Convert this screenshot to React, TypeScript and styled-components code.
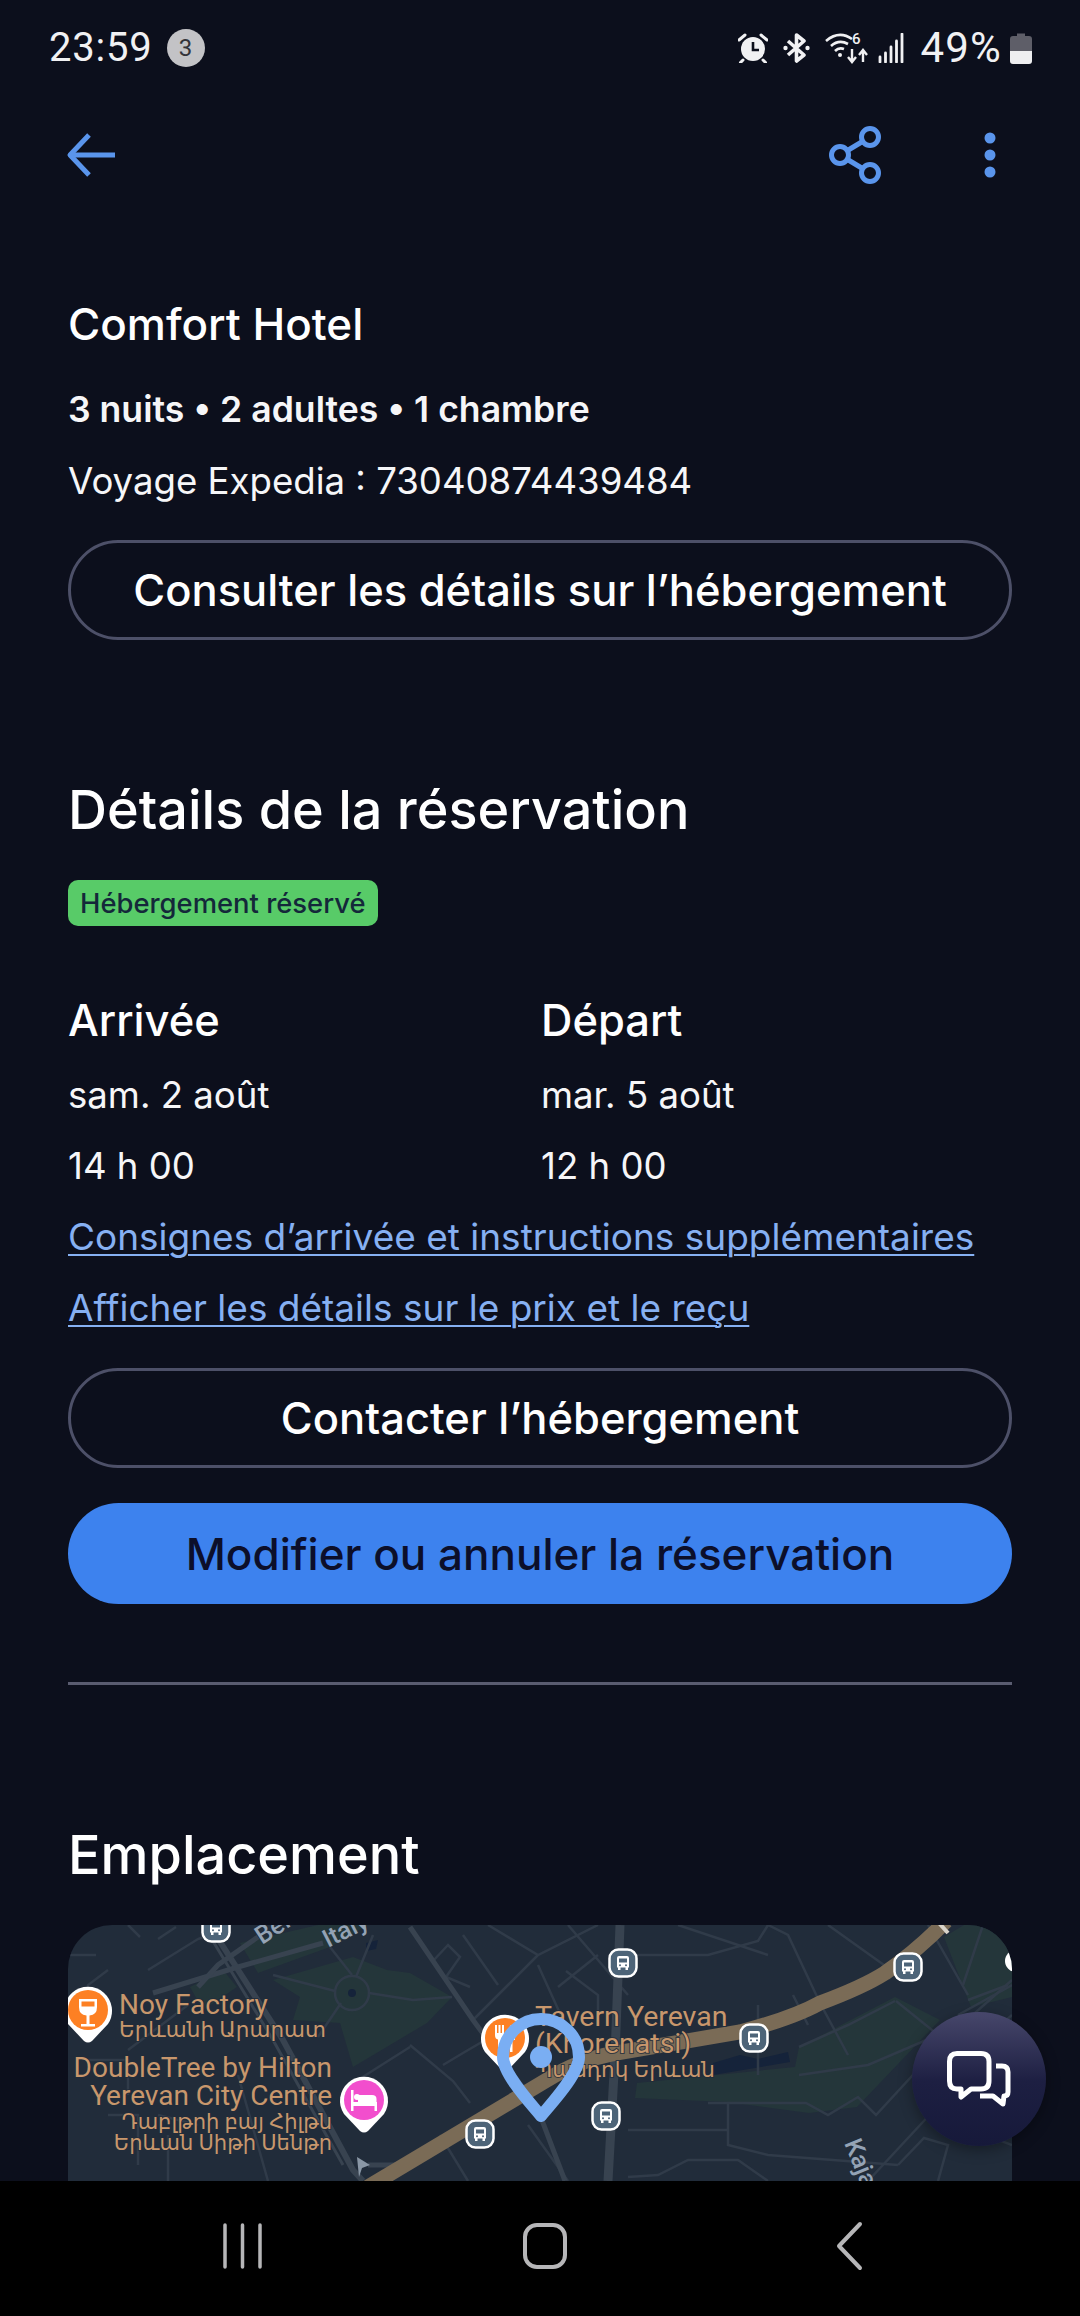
import React from "react"
import styled, { createGlobalStyle } from "styled-components"

const GlobalStyle = createGlobalStyle`
  html, body {
    margin: 0;
    padding: 0;
    background: #0c0f1c;
  }
  * {
    box-sizing: border-box;
  }
`

const UI_FONT = `"Inter", "Lato", sans-serif`
const SYSTEM_FONT = `"Roboto", sans-serif`
const MAP_FONT = `"Roboto", "Noto Sans", "DejaVu Sans", sans-serif`

const Page = styled.div`
  width: 1080px;
  height: 2316px;
  display: flex;
  flex-direction: column;
  background: #0c0f1c;
  color: #fff;
  font-family: ${UI_FONT};
  overflow: hidden;
`

const StatusBar = styled.div`
  height: 96px;
  flex: none;
  display: flex;
  align-items: center;
  justify-content: space-between;
  padding: 0 48px 0 49px;
  font-family: ${SYSTEM_FONT};
  color: #f1f1f3;
`

const StatusGroup = styled.div`
  display: flex;
  align-items: center;
`

const StatusText = styled.span`
  font-size: 40px;
  line-height: 44px;
  font-weight: 400;
  letter-spacing: 0.8px;
`

const CountBadge = styled.span`
  width: 38px;
  height: 38px;
  margin-left: 14px;
  border-radius: 50%;
  background: #c3c3c6;
  color: #33343a;
  font-size: 24px;
  display: flex;
  align-items: center;
  justify-content: center;
`

const StatusIcon = styled.svg<{ $left: number }>`
  display: block;
  flex: none;
  margin-left: ${(p) => p.$left}px;
`

const Percent = styled(StatusText)`
  margin-left: 15px;
  font-size: 42px;
  letter-spacing: 1.2px;
`

const Toolbar = styled.div`
  height: 118px;
  flex: none;
  display: flex;
  align-items: center;
  padding: 0 80px 0 66px;
`

const ToolbarSpacer = styled.div`
  flex: 1;
`

const ShareIcon = styled.svg`
  display: block;
  margin-right: 96px;
`

const Content = styled.div`
  flex: 1;
  min-height: 0;
  position: relative;
  padding: 0 68px;
  display: flex;
  flex-direction: column;
  overflow: hidden;
`

const HotelName = styled.h1`
  margin: 82px 0 0;
  font-size: 44px;
  line-height: 56px;
  font-weight: 500;
`

const Line = styled.div<{ $top: number; $strong?: boolean }>`
  margin-top: ${(p) => p.$top}px;
  font-size: ${(p) => (p.$strong ? 35.6 : 36.6)}px;
  line-height: 48px;
  font-weight: ${(p) => (p.$strong ? 600 : 400)};
  color: #f6f6f8;
`

const OutlineButton = styled.button<{ $top: number }>`
  height: 100px;
  flex: none;
  margin-top: ${(p) => p.$top}px;
  border: 3px solid #4d5068;
  border-radius: 50px;
  background: transparent;
  color: #fff;
  font-family: inherit;
  font-size: 43.5px;
  font-weight: 500;
  padding: 0;
`

const PrimaryButton = styled.button`
  height: 101px;
  flex: none;
  margin-top: 35px;
  border: none;
  border-radius: 51px;
  background: #3d82ee;
  color: #0c0f2a;
  font-family: inherit;
  font-size: 44px;
  font-weight: 500;
  padding: 0;
`

const SectionTitle = styled.h2<{ $top: number }>`
  margin: ${(p) => p.$top}px 0 0;
  font-size: 54px;
  line-height: 64px;
  font-weight: 500;
`

const StatusTag = styled.div`
  align-self: flex-start;
  height: 47px;
  margin-top: 38px;
  padding: 0 12px;
  border-radius: 10px;
  background: #58cb68;
  color: #14283a;
  font-size: 27.4px;
  line-height: 46px;
  font-weight: 500;
`

const DatesGrid = styled.div`
  display: grid;
  grid-template-columns: 473px 1fr;
  margin-top: 70px;
`

const DateTitle = styled.div`
  font-size: 43.5px;
  line-height: 48px;
  font-weight: 500;
`

const LinkLine = styled.a`
  display: block;
  margin-top: 23px;
  font-size: 37px;
  line-height: 48px;
  color: #86b0f2;
  text-decoration: underline;
  text-decoration-thickness: 2px;
  text-underline-offset: 4px;
`

const Divider = styled.div`
  height: 3px;
  flex: none;
  margin-top: 78px;
  background: #5a5c70;
`

const MapFrame = styled.div`
  height: 256px;
  flex: none;
  margin-top: 38px;
  border-radius: 44px 44px 0 0;
  overflow: hidden;
  background: #212c3a;
`

const MapDrawing = styled.svg`
  display: block;
`

const ChatFab = styled.button`
  position: absolute;
  left: 912px;
  top: 1798px;
  width: 134px;
  height: 134px;
  border: none;
  border-radius: 50%;
  padding: 0;
  display: flex;
  align-items: center;
  justify-content: center;
  background: linear-gradient(180deg, #47476b 0%, #1d1f42 52%, #16193a 100%);
  box-shadow: 0 4px 14px rgba(0, 0, 0, 0.35);
`

const NavBar = styled.div`
  height: 135px;
  flex: none;
  background: #000;
  position: relative;
`

const NavIcons = styled.svg`
  display: block;
`

const busStops: [number, number][] = [
  [148, 3],
  [412, 209],
  [555, 38],
  [840, 42],
  [686, 113],
  [538, 191],
]

const thinRoads = [
  "M0 30 H28 M40 45 L20 60 V95 M0 95 H24",
  "M60 0 L72 12 M108 2 L90 14 M80 45 L130 14 L150 6",
  "M20 135 H60 V170 M40 190 H70 V240 M100 210 V256",
  "M342 120 L385 156 L402 178 M342 122 L282 160 M375 140 L395 128 L460 90",
  "M420 0 L470 30 L530 0 M470 30 L440 60 L405 95",
  "M395 10 L430 60 M365 36 L380 20 L392 32 L378 52 L402 62",
  "M470 40 L510 128 M500 0 L560 70 M490 62 L530 30 M498 46 L530 70 V100",
  "M552 30 L600 30 L640 30 L690 16 L700 0 L720 10 L752 78 L780 130",
  "M690 80 V150 M725 70 L740 100 M610 0 L700 30",
  "M760 0 L830 50 M860 0 L900 70 M828 76 L895 130 M890 90 L944 60",
  "M640 178 L738 178 L760 190 L790 172 L808 190 L880 112 L944 55",
  "M660 178 V220 L700 230 L830 240 M560 205 L660 205 M800 256 L880 170",
  "M880 170 L892 200 L944 220 M830 240 L856 213 L880 220 L870 256",
  "M560 252 L590 250 L620 235 L670 235 L700 256 M460 200 L500 256",
  "M731 122 L780 100 L827 76 M731 150 L800 140 L870 110",
  "M910 120 L944 90 M915 0 L895 60 M940 60 L900 75",
  "M372 210 L400 256 M170 150 L200 256 M60 125 L120 80 M90 190 L130 200",
]

const BusStop: React.FC<{ x: number; y: number }> = ({ x, y }) => (
  <g transform={`translate(${x - 14.5} ${y - 14.5})`}>
    <rect x="1" y="1" width="27" height="27" rx="9" fill="#4d6478" stroke="#fff" strokeWidth="2.5" />
    <path
      d="M8.5 9.5 Q8.5 7.5 10.5 7.5 H18.5 Q20.5 7.5 20.5 9.5 V19 H19.5 V21.5 H17 V19 H12 V21.5 H9.5 V19 H8.5 Z"
      fill="#fff"
    />
    <rect x="10.5" y="10" width="8" height="4" fill="#4d6478" />
    <circle cx="11.5" cy="16.7" r="1" fill="#4d6478" />
    <circle cx="17.5" cy="16.7" r="1" fill="#4d6478" />
  </g>
)

const PoiPin: React.FC<{ x: number; y: number; color: string; children: React.ReactNode }> = ({
  x,
  y,
  color,
  children,
}) => (
  <g transform={`translate(${x} ${y})`}>
    <path d="M-20 14 A24 24 0 1 1 20 14 L4 31 Q0 34 -4 31 Z" fill="#fff" />
    <circle r="20" fill={color} />
    {children}
  </g>
)

const MapLabel = styled.text<{ $size: number }>`
  font-family: ${MAP_FONT};
  font-size: ${(p) => p.$size}px;
  fill: #c8976c;
  stroke: rgba(33, 44, 58, 0.8);
  stroke-width: 2px;
  paint-order: stroke;
`

const RoadLabel = styled.text`
  font-family: ${MAP_FONT};
  font-size: 25px;
  font-weight: 500;
  fill: #94a3b5;
`

const LocationMap: React.FC = () => (
  <MapFrame>
    <MapDrawing width="944" height="256" viewBox="0 0 944 256">
      <g fill="#24363a">
        <path d="M205 55 L285 32 L319 45 L342 48 L384 72 L359 98 L285 142 L272 98 L225 95 L232 72 Z" />
        <path d="M122 62 L155 45 L169 62 L135 85 Z" />
        <path d="M172 18 L250 0 L300 0 L262 22 L190 48 Z" />
        <path d="M569 158 L727 142 L731 122 L827 72 L872 95 L789 182 L741 188 L659 177 L567 173 Z" />
        <path d="M876 12 L896 0 H944 V72 L903 82 Z" />
      </g>
      <g fill="#15233a">
        <path d="M645 138 L672 130 L690 134 L720 127 L722 137 L645 150 Z" />
        <path d="M298 18 L310 15 L308 24 L298 26 Z" />
        <circle cx="284" cy="68" r="4" />
      </g>
      <g fill="none" stroke="#303b49" strokeWidth="2.5">
        {thinRoads.map((d) => (
          <path key={d} d={d} />
        ))}
        <circle cx="284" cy="68" r="17" />
        <path d="M205 50 L267 66 M301 68 L345 75 L384 72 M262 22 L284 50 M305 10 L288 52 M250 112 L273 78" />
      </g>
      <g fill="none" stroke="#384350">
        <path d="M552 0 L547 130 L540 256" strokeWidth="9" />
        <path d="M149 12 L215 115 L285 245 L295 256" strokeWidth="6" />
        <path d="M140 8 L205 115 L275 240" strokeWidth="3" />
        <path d="M85 68 L170 42 L255 18" strokeWidth="5" />
        <path d="M130 62 L150 40 L190 12" strokeWidth="5" />
        <path d="M342 2 L405 95 L469 182 L497 256" strokeWidth="5" />
        <path d="M300 240 H330" strokeWidth="5" />
      </g>
      <path
        d="M300 262 L479 155 Q510 135 548 128 L672 107 Q725 93 752 78 Q795 62 817 48 Q850 25 878 -4"
        fill="none"
        stroke="#7a6b56"
        strokeWidth="15"
      />
      <path d="M871 -2 L880 8" stroke="#d9d4ca" strokeWidth="4" />
      <path d="M289 232 L302 240 L294 243 L291 252 Z" fill="#8a97a6" />

      <RoadLabel transform="translate(194 20) rotate(-33)">Beil</RoadLabel>
      <RoadLabel transform="translate(260 23) rotate(-27)">Italy</RoadLabel>
      <RoadLabel transform="translate(776 218) rotate(68)">Kaja</RoadLabel>

      <MapLabel $size={28} x="51" y="89">Noy Factory</MapLabel>
      <MapLabel $size={21.5} x="51" y="112">Երևանի Արարատ</MapLabel>
      <MapLabel $size={28} x="264" y="152" textAnchor="end">DoubleTree by Hilton</MapLabel>
      <MapLabel $size={28} x="264" y="180" textAnchor="end">Yerevan City Centre</MapLabel>
      <MapLabel $size={21} x="264" y="204" textAnchor="end">Դաբլթրի բայ Հիլթն</MapLabel>
      <MapLabel $size={21} x="264" y="225" textAnchor="end">Երևան Սիթի Սենթր</MapLabel>

      <PoiPin x={20} y={85} color="#fd8023">
        <path d="M-9 -11 H9 V-3 Q9 5 1.5 5.5 V14 H7 V16.5 H-7 V14 H-1.5 V5.5 Q-9 5 -9 -3 Z" fill="#fff" />
        <rect x="-6.5" y="-8.5" width="13" height="5" fill="#fd8023" />
      </PoiPin>
      <PoiPin x={296} y={175} color="#f24ecd">
        <path
          d="M-13 -10 H-10.5 V2 H12.5 V-1 Q12.5 -5 8 -5 H-6 V2 H13 V11 H10.5 V6 H-10.5 V11 H-13 Z"
          fill="#fff"
        />
        <circle cx="-7" cy="-3" r="3" fill="#fff" />
      </PoiPin>
      <PoiPin x={437} y={113} color="#fd8023">
        <path d="M-10 -13 V-3 Q-10 1 -7 1.5 V14 H-4 V1.5 Q-1 1 -1 -3 V-13 H-3 V-5 H-4.5 V-13 H-6.5 V-5 H-8 V-13 Z M5 -13 Q10 -8 10 2 H7.5 V14 H5 Z" fill="#fff" />
      </PoiPin>

      {busStops.map(([x, y]) => (
        <BusStop key={`${x}-${y}`} x={x} y={y} />
      ))}

      <MapLabel $size={28.5} x="467" y="101">Tavern Yerevan</MapLabel>
      <MapLabel $size={28.5} x="467" y="128">(Khorenatsi)</MapLabel>
      <MapLabel $size={21.5} x="467" y="152">Պանդոկ Երևան</MapLabel>

      <circle cx="948" cy="36" r="11" fill="#fff" />

      <path
        d="M473 191 C466 182 435 150 435 132 A38 38 0 0 1 511 132 C511 150 480 182 473 191 Z"
        fill="none"
        stroke="#7aaef3"
        strokeWidth="12"
        strokeLinejoin="round"
      />
      <circle cx="473" cy="132" r="11" fill="#7aaef3" />
    </MapDrawing>
  </MapFrame>
)

const App: React.FC = () => (
  <Page>
    <GlobalStyle />
    <StatusBar>
      <StatusGroup>
        <StatusText>23:59</StatusText>
        <CountBadge>3</CountBadge>
      </StatusGroup>
      <StatusGroup>
        <StatusIcon $left={0} width="30" height="30" viewBox="0 0 30 30">
          <circle cx="15" cy="16" r="12" fill="#f1f1f3" />
          <path d="M15 9 V17 H21" fill="none" stroke="#0c0f1c" strokeWidth="2.6" />
          <path d="M1 7 L7 2 M29 7 L23 2 M5 27 L2.5 29.5 M25 27 L27.5 29.5" stroke="#f1f1f3" strokeWidth="3" strokeLinecap="round" />
        </StatusIcon>
        <StatusIcon $left={15} width="27" height="30" viewBox="0 0 27 30">
          <path d="M5 8 L21 22 L13.5 28 V2 L21 8 L5 22" fill="none" stroke="#f1f1f3" strokeWidth="3.6" strokeLinejoin="round" />
          <circle cx="2.5" cy="15" r="2.2" fill="#f1f1f3" />
          <circle cx="24.5" cy="15" r="2.2" fill="#f1f1f3" />
        </StatusIcon>
        <StatusIcon $left={15} width="45" height="32" viewBox="0 0 45 32">
          <path d="M1 9 Q14 -2 27 7 M6 14 Q14 7 23 12 M10 19 Q14 15 19 17" fill="none" stroke="#f1f1f3" strokeWidth="2.6" />
          <circle cx="15" cy="23" r="2" fill="#f1f1f3" />
          <text x="27" y="12" fill="#f1f1f3" fontSize="15" fontFamily={SYSTEM_FONT} fontWeight="500">6</text>
          <path d="M27 17 V29 M23 25 L27 30 L31 25 M38 30 V19 M34 23 L38 18 L42 23" fill="none" stroke="#f1f1f3" strokeWidth="2.4" />
        </StatusIcon>
        <StatusIcon $left={8} width="27" height="30" viewBox="0 0 27 30">
          <path d="M2 24 V29 M7.5 20 V29 M13 14 V29 M18.5 8 V29 M24 1 V29" stroke="#f1f1f3" strokeWidth="2.8" strokeLinecap="round" />
        </StatusIcon>
        <Percent>49%</Percent>
        <StatusIcon $left={8} width="22" height="31" viewBox="0 0 22 31">
          <path d="M7 0.5 H15 V3 H19 Q22 3 22 6 V18 H0 V6 Q0 3 3 3 H7 Z" fill="#5e5e68" />
          <path d="M0 18 H22 V28 Q22 31 19 31 H3 Q0 31 0 28 Z" fill="#eeeef0" />
        </StatusIcon>
      </StatusGroup>
    </StatusBar>

    <Toolbar>
      <svg width="50" height="44" viewBox="0 0 50 44" fill="none" stroke="#5a95ec" strokeWidth="5">
        <path d="M49 22 H5" />
        <path d="M23 2 L4 22 L23 42" strokeLinejoin="round" />
      </svg>
      <ToolbarSpacer />
      <ShareIcon width="56" height="60" viewBox="0 0 56 60" fill="none" stroke="#5a95ec" strokeWidth="5">
        <circle cx="42" cy="12" r="8.5" />
        <circle cx="12" cy="30" r="8.5" />
        <circle cx="42" cy="48" r="8.5" />
        <path d="M19.5 25.5 L34.5 16.5 M19.5 34.5 L34.5 43.5" />
      </ShareIcon>
      <svg width="20" height="56" viewBox="0 0 20 56" fill="#5a95ec">
        <circle cx="10" cy="11" r="5.5" />
        <circle cx="10" cy="28" r="5.5" />
        <circle cx="10" cy="45" r="5.5" />
      </svg>
    </Toolbar>

    <Content>
      <HotelName>Comfort Hotel</HotelName>
      <Line $top={34} $strong>3 nuits • 2 adultes • 1 chambre</Line>
      <Line $top={23}>Voyage Expedia : 73040874439484</Line>
      <OutlineButton $top={35}>Consulter les détails sur l’hébergement</OutlineButton>

      <SectionTitle $top={138}>Détails de la réservation</SectionTitle>
      <StatusTag>Hébergement réservé</StatusTag>

      <DatesGrid>
        <div>
          <DateTitle>Arrivée</DateTitle>
          <Line $top={27}>sam. 2 août</Line>
          <Line $top={23}>14 h 00</Line>
        </div>
        <div>
          <DateTitle>Départ</DateTitle>
          <Line $top={27}>mar. 5 août</Line>
          <Line $top={23}>12 h 00</Line>
        </div>
      </DatesGrid>
      <LinkLine>Consignes d’arrivée et instructions supplémentaires</LinkLine>
      <LinkLine>Afficher les détails sur le prix et le reçu</LinkLine>

      <OutlineButton $top={36}>Contacter l’hébergement</OutlineButton>
      <PrimaryButton>Modifier ou annuler la réservation</PrimaryButton>
      <Divider />

      <SectionTitle $top={138}>Emplacement</SectionTitle>
      <LocationMap />

      <ChatFab aria-label="Chat">
        <svg width="64" height="56" viewBox="0 0 64 56" fill="none" stroke="#fff" strokeWidth="5" strokeLinejoin="round">
          <path d="M10 2.5 H34 Q42 2.5 42 10.5 V30 Q42 38 34 38 H24 L14 46 V38 H10 Q2.5 38 2.5 30 V10.5 Q2.5 2.5 10 2.5 Z" />
          <path d="M49 15 H55 Q61 15 61 21 V41 Q61 45 57 45 L56 53 L46 45 H33" />
        </svg>
      </ChatFab>
    </Content>

    <NavBar>
      <NavIcons width="1080" height="135" viewBox="0 0 1080 135" fill="none" stroke="#b6b6b8">
        <path d="M225 44 V86 M242.5 44 V86 M260 44 V86" strokeWidth="3.5" strokeLinecap="round" />
        <rect x="525" y="44" width="40" height="42" rx="12" strokeWidth="4" />
        <path d="M860 43 L839 65 L860 87" strokeWidth="4" strokeLinecap="round" strokeLinejoin="round" />
      </NavIcons>
    </NavBar>
  </Page>
)

export default App
